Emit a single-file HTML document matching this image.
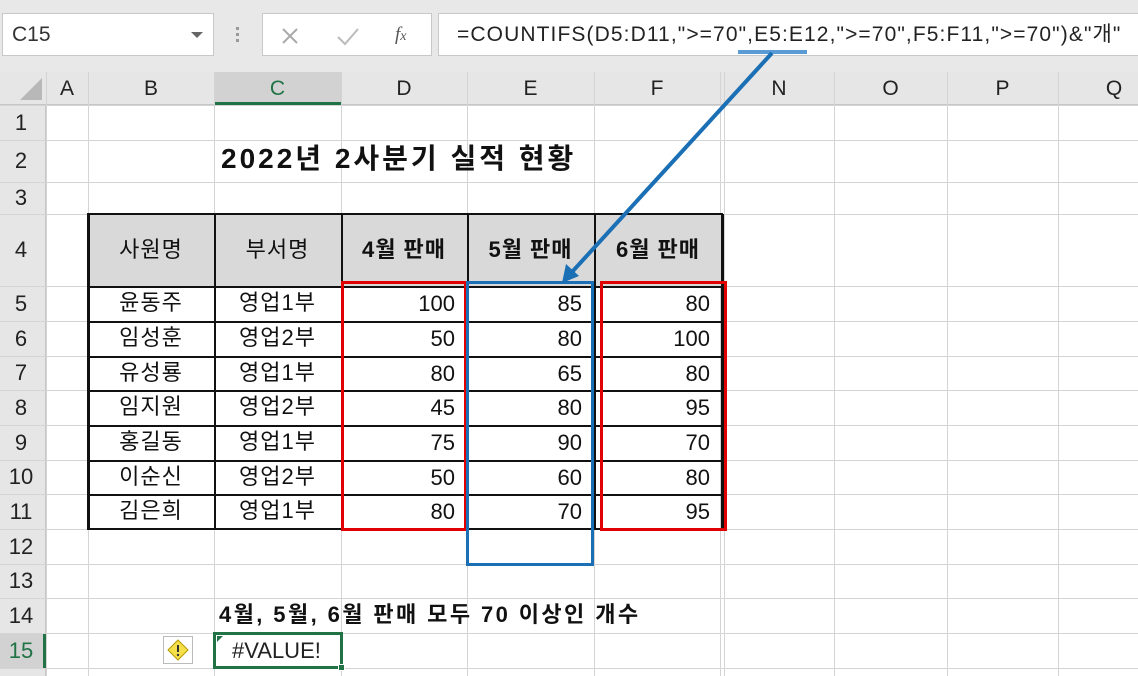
<!DOCTYPE html>
<html><head><meta charset="utf-8"><style>
*{margin:0;padding:0;box-sizing:border-box}
body{width:1138px;height:676px;overflow:hidden;background:#fff;position:relative;font-family:"Liberation Sans","Noto Sans CJK KR",sans-serif;color:#111}
.a{position:absolute}
.t{position:absolute;font-size:21px;line-height:1;white-space:nowrap}
</style></head><body>
<div class="a" style="left:0;top:0;width:1138px;height:72px;background:#e8e8e8"></div>
<div class="a" style="left:2px;top:13px;width:212px;height:43px;background:#fff;border:1px solid #c8c8c8"></div>
<div class="t" style="left:12px;top:24px;font-size:21px;color:#333">C15</div>
<svg class="a" style="left:190px;top:30px" width="14" height="10"><path d="M1 2 L7 8 L13 2Z" fill="#666"/></svg>
<div class="a" style="left:236px;top:27px;width:3px;height:3px;background:#999;box-shadow:0 6px 0 #999,0 12px 0 #999"></div>
<div class="a" style="left:262px;top:13px;width:170px;height:43px;background:#fff;border:1px solid #c8c8c8"></div>
<svg class="a" style="left:280px;top:26px" width="20" height="20"><path d="M3 3 L17 17 M17 3 L3 17" stroke="#aaa" stroke-width="2"/></svg>
<svg class="a" style="left:336px;top:26px" width="24" height="20"><path d="M2 11 L9 18 L22 3" stroke="#bbb" stroke-width="2" fill="none"/></svg>
<div class="t" style="left:395px;top:25px;font-family:'Liberation Serif',serif;font-style:italic;font-size:19px;color:#555">f<span style="font-size:14px">x</span></div>
<div class="a" style="left:438px;top:13px;width:710px;height:43px;background:#fff;border:1px solid #c8c8c8"></div>
<div class="t" style="left:457px;top:24px;font-size:21px;color:#222;letter-spacing:1.1px">=COUNTIFS(D5:D11,"&gt;=70",E5:E12,"&gt;=70",F5:F11,"&gt;=70")&amp;"개"</div>
<div class="a" style="left:738px;top:50px;width:69px;height:4px;background:#5b9bd5"></div>
<div class="a" style="left:0;top:72px;width:1138px;height:33px;background:#e6e6e6;border-bottom:1px solid #c6c6c6"></div>
<div class="a" style="left:214px;top:72px;width:127px;height:33px;background:#d2d2d2;border-bottom:3px solid #217346"></div>
<svg class="a" style="left:18px;top:76px" width="26" height="26"><path d="M24 2 L24 24 L2 24Z" fill="#b8b8b8"/></svg>
<div class="a" style="left:0;top:105px;width:46px;height:571px;background:#e6e6e6;border-right:1px solid #c6c6c6"></div>
<div class="a" style="left:0;top:633px;width:46px;height:35px;background:#d2d2d2;border-right:3px solid #217346"></div>
<div id="g"></div>
<script>
var xs=[46,88,214,341,467,594,720,724,834,947,1058];
var ys=[105,140,182,214,286,321,356,390,425,460,494,529,564,598,633,668];
var h='';
xs.forEach(function(x){h+='<div class="a" style="left:'+x+'px;top:72px;width:1px;height:604px;background:#d4d4d4"></div>';});
ys.forEach(function(y){h+='<div class="a" style="left:0;top:'+y+'px;width:1138px;height:1px;background:#d4d4d4"></div>';});
var cols=[['A',46,88],['B',88,214],['C',214,341],['D',341,467],['E',467,594],['F',594,720],['N',724,834],['O',834,947],['P',947,1058],['Q',1058,1170]];
cols.forEach(function(c){h+='<div class="t" style="left:'+c[1]+'px;width:'+(c[2]-c[1])+'px;text-align:center;top:78px;font-size:21px;color:'+(c[0]=='C'?'#217346':'#222')+'">'+c[0]+'</div>';});
for(var i=0;i<15;i++){var t=ys[i],b=ys[i+1];h+='<div class="t" style="left:0;width:42px;text-align:center;top:'+((t+b)/2-11)+'px;font-size:22px;color:'+(i==14?'#217346':'#222')+'">'+(i+1)+'</div>';}
h+='<div class="a" style="left:88px;top:214px;width:634px;height:72px;background:#d9d9d9"></div>';
var tx=[88,214,341,467,594,722];
for(var r=4;r<=10;r++){h+='<div class="a" style="left:88px;top:'+ys[r]+'px;width:634px;height:2px;background:#111"></div>';}
tx.forEach(function(x){h+='<div class="a" style="left:'+x+'px;top:214px;width:2px;height:316px;background:#111"></div>';});
h+='<div class="a" style="left:87px;top:213px;width:636px;height:317px;border:2px solid #111"></div>';
var hd=['사원명','부서명','4월 판매','5월 판매','6월 판매'];
hd.forEach(function(s,k){h+='<div class="t" style="left:'+tx[k]+'px;width:'+(tx[k+1]-tx[k])+'px;text-align:center;top:239px;font-size:22px;letter-spacing:1px;'+(k>1?'font-weight:bold':'')+'">'+s+'</div>';});
var d=[['윤동주','영업1부',100,85,80],['임성훈','영업2부',50,80,100],['유성룡','영업1부',80,65,80],['임지원','영업2부',45,80,95],['홍길동','영업1부',75,90,70],['이순신','영업2부',50,60,80],['김은희','영업1부',80,70,95]];
d.forEach(function(row,i){var t=ys[i+4];
 h+='<div class="t" style="left:88px;width:126px;text-align:center;top:'+(t+6)+'px;font-size:22px;letter-spacing:1px">'+row[0]+'</div>';
 h+='<div class="t" style="left:214px;width:127px;text-align:center;top:'+(t+6)+'px;font-size:22px;letter-spacing:1px">'+row[1]+'</div>';
 for(var k=2;k<5;k++){h+='<div class="t" style="left:'+tx[k]+'px;width:'+(tx[k+1]-tx[k]-12)+'px;text-align:right;top:'+(t+7)+'px;font-size:22px">'+row[k]+'</div>';}
});
document.getElementById('g').innerHTML=h;
</script>
<div class="a" style="left:341px;top:281px;width:126px;height:250px;border:3px solid #e00000"></div>
<div class="a" style="left:600px;top:281px;width:127px;height:250px;border:3px solid #e00000"></div>
<div class="a" style="left:466px;top:281px;width:128px;height:285px;border:3px solid #1a6fb5"></div>
<svg class="a" style="left:0;top:0" width="1138" height="676"><path d="M772 53 L572 272" stroke="#1a6fb5" stroke-width="4"/><path d="M562 283 L566 264 L579 276Z" fill="#1a6fb5"/></svg>
<div class="t" style="left:221px;top:145px;font-size:28px;font-weight:bold;letter-spacing:3px">2022년 2사분기 실적 현황</div>
<div class="t" style="left:219px;top:604px;font-size:22px;font-weight:bold;letter-spacing:2.4px">4월, 5월, 6월 판매 모두 70 이상인 개수</div>
<div class="a" style="left:213px;top:632px;width:130px;height:37px;border:3px solid #217346;background:#fff"></div>
<div class="a" style="left:338px;top:664px;width:7px;height:7px;background:#217346;border:1px solid #fff"></div>
<svg class="a" style="left:217px;top:636px" width="6" height="6"><path d="M0 0 L6 0 L0 6Z" fill="#217346"/></svg>
<div class="t" style="left:232px;top:640px;font-size:22px;color:#222">#VALUE!</div>
<div class="a" style="left:163px;top:636px;width:30px;height:28px;border:1px solid #bbb;background:#fff"></div>
<svg class="a" style="left:166px;top:638px" width="24" height="24"><path d="M12 2 L22 12 L12 22 L2 12Z" fill="#f5e04a" stroke="#b59a00" stroke-width="1"/><path d="M12 7 L12 14" stroke="#333" stroke-width="2"/><circle cx="12" cy="17" r="1.2" fill="#333"/></svg>
</body></html>
